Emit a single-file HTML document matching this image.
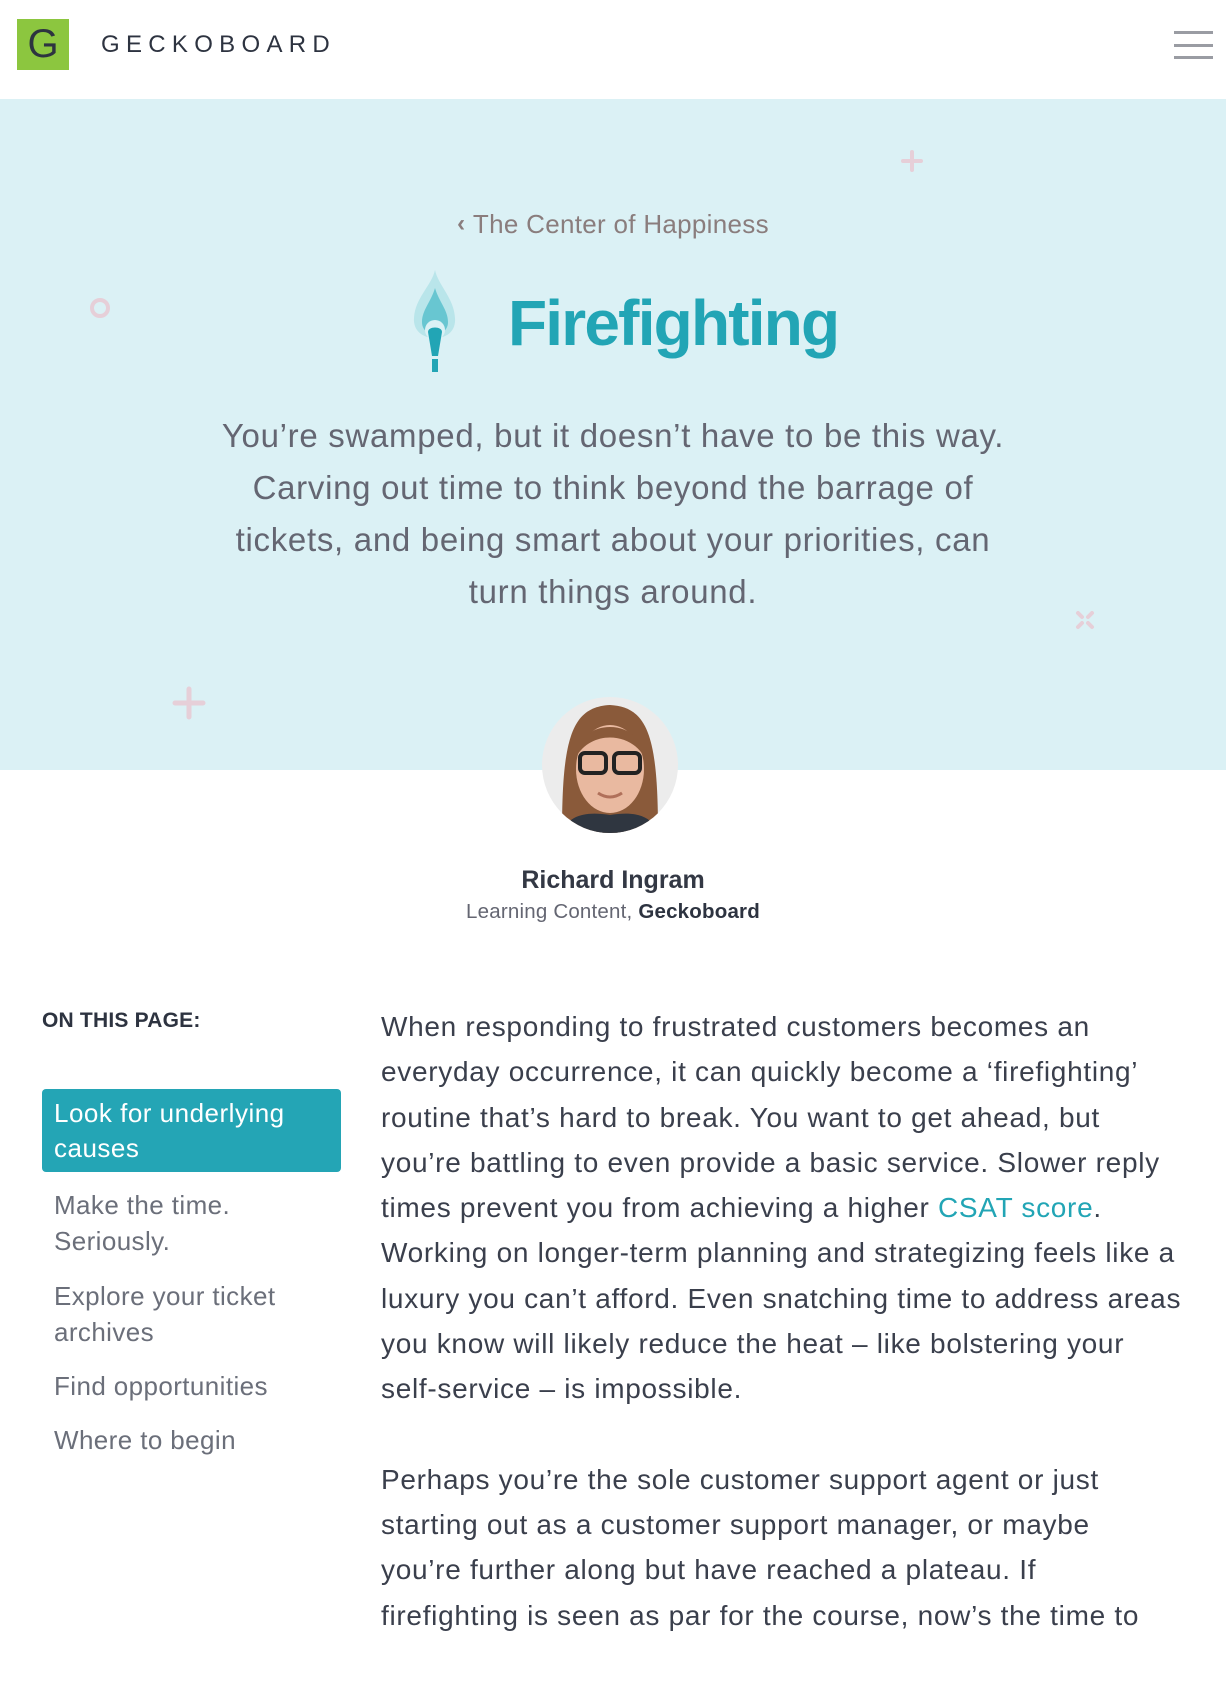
<!DOCTYPE html>
<html><head><meta charset="utf-8"><style>
*{margin:0;padding:0;box-sizing:border-box}
body{width:1226px;height:1630px;overflow:hidden;background:#fff;font-family:"Liberation Sans",Arial,sans-serif;position:relative}
.abs{position:absolute}
.header{position:absolute;left:0;top:0;width:1226px;height:99px;background:#fff}
.logo{left:17px;top:19px;width:52px;height:51px;background:#8cc63f;color:#2d3340;font-size:40px;line-height:51px;text-align:center;font-weight:normal}
.brand{left:101px;top:31px;font-size:24px;letter-spacing:6.3px;color:#2d3340;line-height:28px}
.hb{left:1174px;width:39px;height:3px;background:#9a9ca3}
.hero{left:0;top:99px;width:1226px;height:671px;background:#dbf1f5}
.center{left:0;width:1226px;text-align:center;white-space:nowrap}
.back{top:208px;font-size:26px;color:#8a7d7d;line-height:32px;letter-spacing:0.3px}
.title{left:508px;top:283px;font-size:64px;font-weight:bold;letter-spacing:-1.8px;color:#22a5b5;line-height:80px}
.lead{top:410px;font-size:33px;line-height:52px;color:#646672;letter-spacing:0.7px}
.name{top:865px;font-size:25px;color:#333844;font-weight:bold;line-height:30px}
.role{top:900px;font-size:20.5px;color:#646672;line-height:24px;letter-spacing:0.2px}
.role b{color:#2d3340;font-weight:bold}
.toc-h{left:42px;top:1009px;font-size:21px;font-weight:bold;color:#2d3340;letter-spacing:0.2px}
.active{left:42px;top:1089px;width:299px;height:83px;background:#24a5b5;border-radius:4px;color:#fff;font-size:26px;line-height:35px;padding:7px 0 0 12px;letter-spacing:0.5px}
.item{left:54px;font-size:26px;line-height:36px;color:#6b6f7a;white-space:nowrap;letter-spacing:0.4px}
.body{left:381px;top:1004px;font-size:28px;line-height:45.3px;color:#3a3f4c;white-space:nowrap;letter-spacing:0.7px}
.body p{margin-bottom:45px}
.body a{color:#22a5b5;text-decoration:none}
</style></head><body>
<div class="header">
 <div class="abs logo">G</div>
 <div class="abs brand">GECKOBOARD</div>
 <div class="abs hb" style="top:31px"></div>
 <div class="abs hb" style="top:44px"></div>
 <div class="abs hb" style="top:56px"></div>
</div>
<div class="abs hero"></div>
<svg class="abs" style="left:0;top:99px" width="1226" height="671">
 <g stroke="#e6cfd8" stroke-width="4" stroke-linecap="round" fill="none">
  <path d="M912 53v18M903 62h18"/>
  <circle cx="100" cy="209" r="8"/>
  <path d="M189 590v28M175 604h28" stroke-width="5"/>
  <path d="M1078 514l4 4M1092 514l-4 4M1078 528l4-4M1092 528l-4-4"/>
 </g>
</svg>
<div class="abs center back"><span style="font-weight:bold;font-size:24px;position:relative;top:-2px">&#8249;</span>&nbsp;The Center of Happiness</div>
<svg class="abs" style="left:410px;top:270px" width="50" height="102" viewBox="0 0 50 102">
 <path d="M25 0C22 15 5 28 4 48C3 60 12 68 25 68C38 68 46 60 45 48C44 28 28 15 25 0Z" fill="#b9e5ea"/>
 <path d="M25 18C21 32 12 40 12 52C12 60 18 64 25 64C32 64 38 60 38 52C38 40 29 32 25 18Z" fill="#68c6d1"/>
 <circle cx="25" cy="60" r="10" fill="#dbf1f5"/>
 <path d="M18 62C18 56 32 56 32 62L28 86H22Z" fill="#22a5b5"/>
 <rect x="22" y="89" width="6" height="13" fill="#22a5b5"/>
</svg>
<div class="abs title">Firefighting</div>
<div class="abs center lead">You’re swamped, but it doesn’t have to be this way.<br>Carving out time to think beyond the barrage of<br>tickets, and being smart about your priorities, can<br>turn things around.</div>
<svg class="abs" style="left:542px;top:697px" width="136" height="136">
 <defs><clipPath id="c"><circle cx="68" cy="68" r="68"/></clipPath></defs>
 <g clip-path="url(#c)">
  <rect width="136" height="136" fill="#ececec"/>
  <path d="M20 136C20 40 30 10 68 8C106 10 116 40 116 136Z" fill="#8a5a3a"/>
  <ellipse cx="68" cy="72" rx="34" ry="44" fill="#e9b9a0"/>
  <path d="M34 60C36 20 100 20 102 60C90 36 50 32 34 60Z" fill="#8a5a3a"/>
  <rect x="38" y="56" width="26" height="20" rx="5" fill="none" stroke="#222" stroke-width="4"/>
  <rect x="72" y="56" width="26" height="20" rx="5" fill="none" stroke="#222" stroke-width="4"/>
  <path d="M56 96Q68 104 80 96" stroke="#b0705a" stroke-width="3" fill="none"/>
  <path d="M20 136C26 118 44 114 68 118C92 114 110 118 116 136Z" fill="#2f3640"/>
 </g>
</svg>
<div class="abs center name">Richard Ingram</div>
<div class="abs center role">Learning Content, <b>Geckoboard</b></div>
<div class="abs toc-h">ON THIS PAGE:</div>
<div class="abs active">Look for underlying<br>causes</div>
<div class="abs item" style="top:1187px">Make the time.<br>Seriously.</div>
<div class="abs item" style="top:1278px">Explore your ticket<br>archives</div>
<div class="abs item" style="top:1368px">Find opportunities</div>
<div class="abs item" style="top:1422px">Where to begin</div>
<div class="abs body">
<p>When responding to frustrated customers becomes an<br>everyday occurrence, it can quickly become a ‘firefighting’<br>routine that’s hard to break. You want to get ahead, but<br>you’re battling to even provide a basic service. Slower reply<br>times prevent you from achieving a higher <a>CSAT score</a>.<br>Working on longer-term planning and strategizing feels like a<br>luxury you can’t afford. Even snatching time to address areas<br>you know will likely reduce the heat – like bolstering your<br>self-service – is impossible.</p>
<p>Perhaps you’re the sole customer support agent or just<br>starting out as a customer support manager, or maybe<br>you’re further along but have reached a plateau. If<br>firefighting is seen as par for the course, now’s the time to</p>
</div>
</body></html>
